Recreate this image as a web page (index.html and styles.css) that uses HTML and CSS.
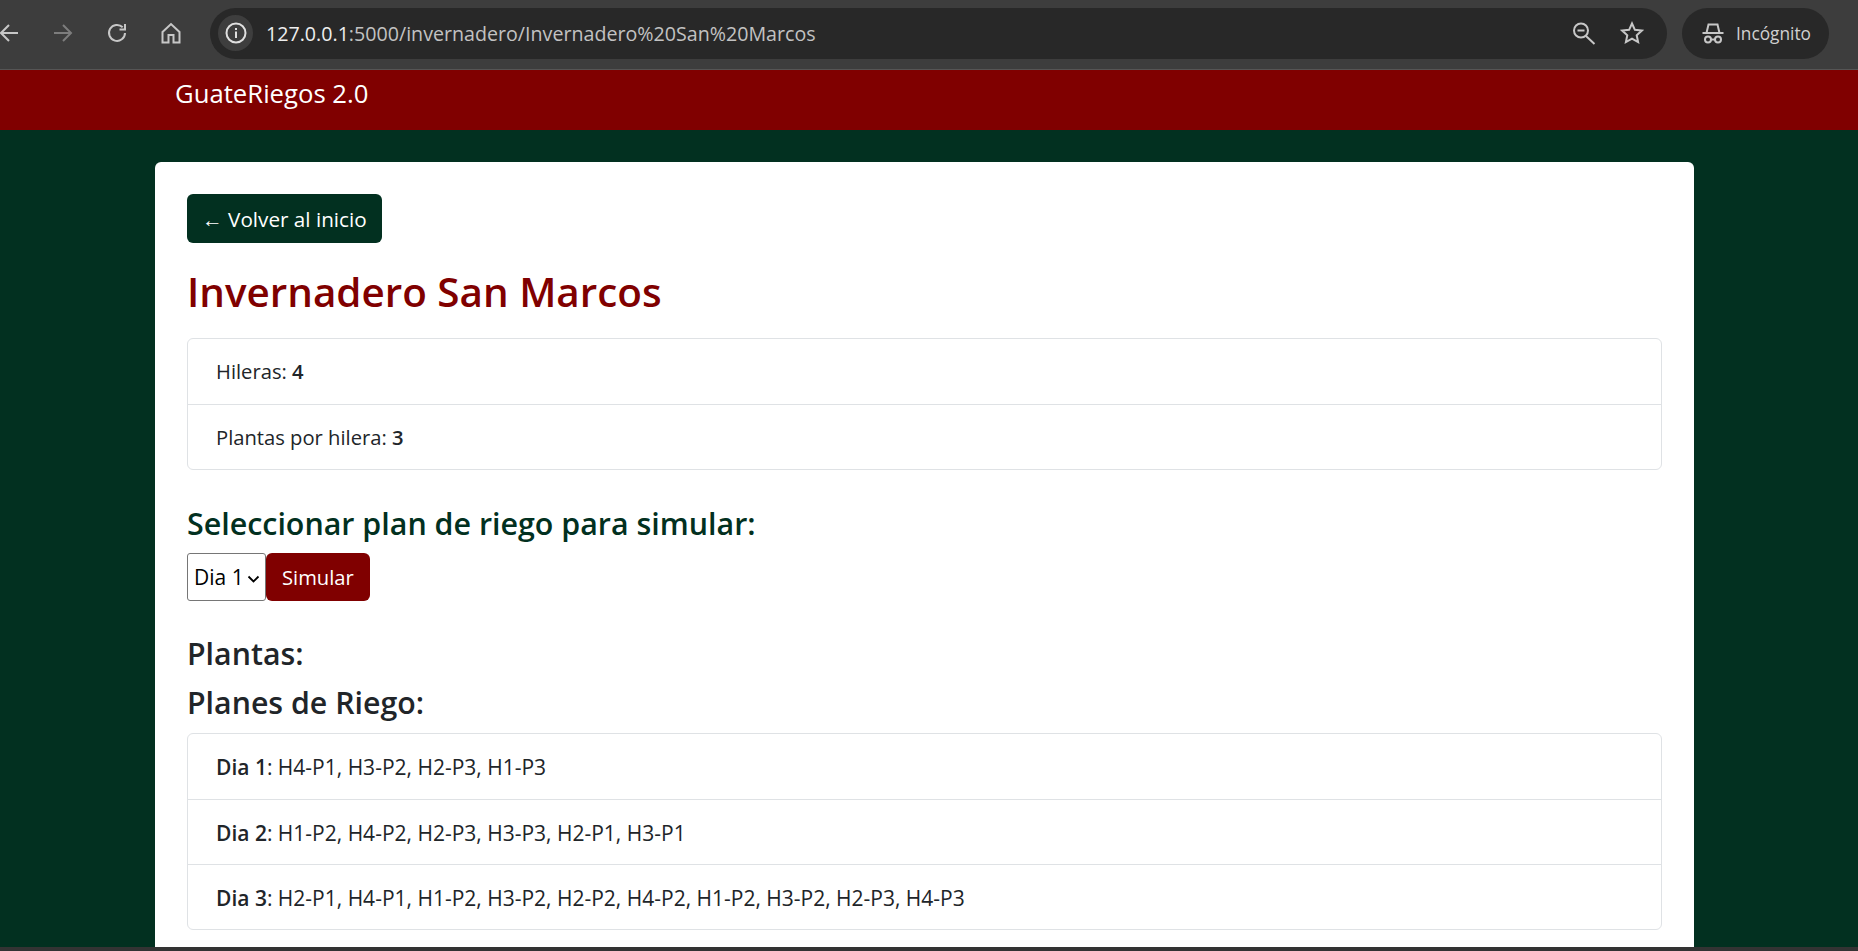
FILE: index.html
```html
<!DOCTYPE html>
<html lang="es">
<head>
<meta charset="utf-8">
<title>GuateRiegos 2.0</title>
<link rel="stylesheet" href="styles.css">
</head>
<body>
<header class="toolbar">
  <div class="nav-icons">
    <svg class="ico" viewBox="0 0 24 24"><path d="M21 12H4M12 4l-8 8 8 8"/></svg>
    <svg class="ico fwd" viewBox="0 0 24 24"><path d="M3 12h17M12 4l8 8-8 8"/></svg>
    <svg class="ico" viewBox="0 0 24 24"><path d="M20 12a8 8 0 1 1-2.300-5.700M20 3v5.500h-5.500"/></svg>
    <svg class="ico" viewBox="0 0 24 24"><path d="M3.500 11 12 3l8.500 8v10.500h-6V14h-5v7.500h-6z"/></svg>
  </div>
  <div class="omnibox">
    <span class="site-info"><svg viewBox="0 0 24 24"><circle cx="12" cy="12" r="9.500"/><path d="M12 10.500V17M12 7v2"/></svg></span>
    <span class="url"><span class="host">127.0.0.1</span>:5000/invernadero/Invernadero%20San%20Marcos</span>
    <span class="omni-end">
      <svg class="ico" viewBox="0 0 24 24"><circle cx="9" cy="9.500" r="7"/><path d="M5.500 9.500h7M14 15l8.500 8"/></svg>
      <svg class="ico" viewBox="0 0 24 24"><path d="m12 2.500 2.900 6.300 6.900.8-5.100 4.700 1.400 6.800-6.100-3.400-6.100 3.400 1.400-6.800-5.100-4.700 6.900-.8z"/></svg>
    </span>
  </div>
  <div class="incognito">
    <svg class="ico" viewBox="0 0 24 24"><path d="M1.500 12h21M5.500 12l2-8.500h9l2 8.500M10 18.500h4"/><circle cx="7" cy="18.500" r="3"/><circle cx="17" cy="18.500" r="3"/></svg>
    <span class="inc-label">Incógnito</span>
  </div>
</header>

<nav class="brandbar"><span class="brand">GuateRiegos 2.0</span></nav>

<main class="page">
  <section class="card">
    <a class="btn btn-green" href="#">← Volver al inicio</a>
    <h1 class="title">Invernadero San Marcos</h1>
    <ul class="list info-list">
      <li>Hileras: <strong>4</strong></li>
      <li>Plantas por hilera: <strong>3</strong></li>
    </ul>
    <h2 class="sim-title">Seleccionar plan de riego para simular:</h2>
    <form class="sim-form">
      <select class="plan"><option>Dia 1</option><option>Dia 2</option><option>Dia 3</option></select>
      <button class="btn btn-red" type="button">Simular</button>
    </form>
    <h2 class="sec first">Plantas:</h2>
    <h2 class="sec">Planes de Riego:</h2>
    <ul class="list plan-list">
      <li><strong>Dia 1</strong>: H4-P1, H3-P2, H2-P3, H1-P3</li>
      <li><strong>Dia 2</strong>: H1-P2, H4-P2, H2-P3, H3-P3, H2-P1, H3-P1</li>
      <li><strong>Dia 3</strong>: H2-P1, H4-P1, H1-P2, H3-P2, H2-P2, H4-P2, H1-P2, H3-P2, H2-P3, H4-P3</li>
    </ul>
  </section>
</main>
<div class="bottom-edge"></div>
</body>
</html>
```
FILE: styles.css
```css
* { box-sizing: border-box; }
html, body { height: 100%; margin: 0; overflow: hidden; }
body {
  display: flex; flex-direction: column;
  background: #023020; color: #212529;
  font-family: "Open Sans", "Noto Sans", sans-serif;
  font-size: 20px; line-height: 30px;
}
.toolbar {
  flex: none; height: 70px; display: flex; align-items: center;
  background: #3d3d3d; border-bottom: 1px solid #555;
  padding-bottom: 3px;
}
.ico { width: 24px; height: 24px; fill: none; stroke: #c7c7c7; stroke-width: 2; flex: none; }
.nav-icons { display: flex; align-items: center; gap: 30px; width: 213px; margin-left: -3px; }
.fwd { stroke: #7d7d7d; }
.omnibox {
  width: 1457px; height: 51px; border-radius: 26px; background: #282828;
  display: flex; align-items: center; padding-left: 8px;
}
.site-info {
  width: 35px; height: 36px; border-radius: 50%; background: #3e3e3e;
  display: flex; align-items: center; justify-content: center;
}
.site-info svg { width: 24px; height: 24px; fill: none; stroke: #e0e0e0; stroke-width: 2; }
.url { margin-left: 13px; padding-top: 2px; color: #c2c2c2; font-size: 19.650px; white-space: nowrap; }
.host { color: #eee; }
.omni-end { margin-left: auto; display: flex; gap: 24px; padding-right: 23px; }
.incognito {
  margin-left: 15px; width: 147px; height: 51px; border-radius: 26px; background: #282828;
  display: flex; align-items: center; gap: 11.500px; padding-left: 18.500px;
  color: #d0d0d0; font-size: 17.300px;
}
.inc-label { padding-top: 2px; }
.brandbar { flex: none; height: 60px; background: #800000; padding: 0 0 0 175px; }
.brand { display: block; color: #fff; font-size: 25.700px; line-height: 30px; margin-top: 9px; }
.page { flex: 1; min-height: 0; padding: 32px 164px 0 155px; }
.card { height: 100%; background: #fff; border-radius: 6px 6px 0 0; padding: 32px; overflow: hidden; }
.btn {
  display: inline-block; border: 0; border-radius: 6px; color: #fff;
  font: inherit; text-decoration: none; padding: 9.500px 15px;
}
.btn-green { background: #023020; font-size: 20.700px; }
.btn-red { background: #800000; height: 48px; padding: 0 16px; font-size: 20.200px; }
.title { margin: 24px 0 21px; color: #800000; font-size: 40.400px; line-height: 50px; font-weight: 600; }
.list { list-style: none; margin: 0; padding: 0; border: 1px solid #dfe2e5; border-radius: 6px; }
.list li { padding: 17px 28px; border-top: 1px solid #dfe2e5; }
.list li:first-child { border-top: 0; }
.list strong { font-weight: 600; }
.info-list li { height: 65px; font-size: 20.200px; }
.plan-list li { height: 65px; padding-top: 18px; font-size: 21px; }
.sim-title { margin: 35px 0 10px; color: #023020; font-size: 30.400px; line-height: 38px; font-weight: 600; }
.sim-form { display: flex; height: 48px; }
.plan {
  appearance: none; width: 79px; height: 48px; font: inherit; font-size: 21px; color: #000;
  background: #fff url("data:image/svg+xml,%3Csvg xmlns='http://www.w3.org/2000/svg' viewBox='0 0 13 8'%3E%3Cpath d='M1.500 1.500 6.500 6.500 11.500 1.500' fill='none' stroke='%23000' stroke-width='1.800'/%3E%3C/svg%3E") no-repeat 59px 21px / 13px 8px;
  border: 1px solid #767676; border-radius: 3px; padding: 0 0 0 6px;
}
.sec { margin: 0 0 11px; font-size: 30.300px; line-height: 38px; font-weight: 600; }
.sec.first { margin-top: 34px; }
.bottom-edge { flex: none; height: 4px; background: #333; }
```
